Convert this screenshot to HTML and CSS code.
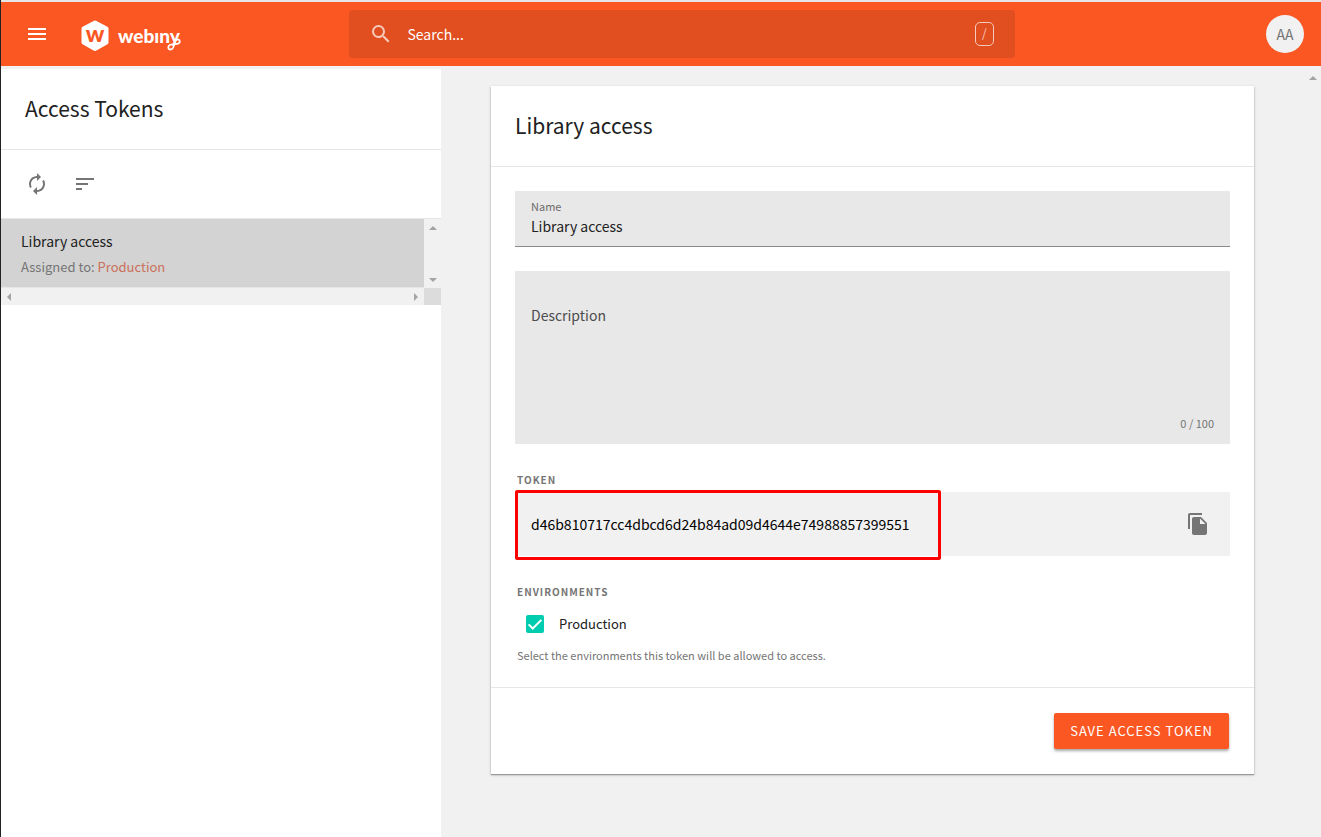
FILE: index.html
```html
<!DOCTYPE html>
<html lang="en">
<head>
<meta charset="utf-8">
<title>Access Tokens</title>
<link rel="stylesheet" href="styles.css">
</head>
<body>
<div class="app">
  <header class="topbar">
    <div class="topbar-left">
      <button class="icon-button menu-button" type="button" aria-label="Menu">
        <svg width="24" height="24" viewBox="0 0 24 24" fill="currentColor"><path d="M3 18h18v-2H3v2zm0-5h18v-2H3v2zm0-7v2h18V6H3z"/></svg>
      </button>
      <a class="logo" href="#" aria-label="webiny">
        <svg width="101" height="34" viewBox="0 0 101 34">
          <path d="M14 3.500L25.500 9.500V23.500L14 30L2.500 23.500V9.500Z" fill="#fff" stroke="#fff" stroke-width="4" stroke-linejoin="round"/>
          <text class="logo-mark" x="14" y="23" text-anchor="middle">w</text>
          <text class="logo-word" x="37" y="24">webıny</text>
          <path d="M94 21C93.500 26 92.500 30.500 89.500 30.500C86.500 30.500 86.500 26.500 90 25.500C94 24.500 98.800 26 98.800 22.500C98.800 20.500 96.500 19.800 95.500 21" fill="none" stroke="#fff" stroke-width="1.800" stroke-linecap="round"/>
        </svg>
      </a>
    </div>
    <label class="search">
      <svg width="24" height="24" viewBox="0 0 24 24" fill="currentColor"><path d="M15.500 14h-.79l-.28-.27A6.471 6.471 0 0 0 16 9.500 6.500 6.500 0 1 0 9.500 16c1.610 0 3.090-.59 4.230-1.570l.27.28v.79l5 4.990L20.490 19l-4.990-5zm-6 0C7.010 14 5 11.990 5 9.500S7.010 5 9.500 5 14 7.010 14 9.500 11.990 14 9.500 14z"/></svg>
      <input class="search-input" type="text" placeholder="Search..." aria-label="Search">
      <kbd class="search-key">/</kbd>
    </label>
    <div class="topbar-right">
      <button class="avatar" type="button">AA</button>
    </div>
  </header>

  <div class="body">
    <aside class="sidebar">
      <h1 class="heading">Access Tokens</h1>
      <div class="toolbar">
        <button class="icon-button" type="button" aria-label="Refresh">
          <svg width="24" height="24" viewBox="0 0 24 24" fill="currentColor"><path d="M12 6v3l4-4-4-4v3c-4.420 0-8 3.580-8 8 0 1.570.46 3.030 1.240 4.260L6.700 14.800A5.870 5.870 0 0 1 6 12c0-3.310 2.690-6 6-6zm6.760 1.740L17.300 9.200c.44.84.7 1.790.7 2.800 0 3.310-2.690 6-6 6v-3l-4 4 4 4v-3c4.420 0 8-3.580 8-8 0-1.570-.46-3.030-1.240-4.260z"/></svg>
        </button>
        <button class="icon-button" type="button" aria-label="Sort">
          <svg width="24" height="24" viewBox="0 0 24 24" fill="currentColor"><path d="M3 18h6v-2H3v2zM3 6v2h18V6H3zm0 7h12v-2H3v2z"/></svg>
        </button>
      </div>
      <div class="list">
        <a class="list-item" href="#">
          <span class="item-name">Library access</span>
          <span class="item-meta">Assigned to: <span class="env-name">Production</span></span>
        </a>
        <div class="track track-v"><i class="arrow up"></i><i class="arrow down"></i></div>
        <div class="track track-h"><i class="arrow left"></i><i class="arrow right"></i></div>
        <div class="track-corner"></div>
      </div>
    </aside>

    <main class="content">
      <form class="card">
        <h2 class="heading">Library access</h2>
        <div class="card-body">
          <div class="field">
            <label class="field-label" for="name">Name</label>
            <input class="field-input" id="name" type="text" value="Library access">
          </div>
          <div class="field-area">
            <textarea class="area-input" id="description" placeholder="Description" aria-label="Description"></textarea>
            <span class="counter">0 / 100</span>
          </div>
          <section class="group">
            <h3 class="group-label">TOKEN</h3>
            <div class="token">
              <span class="token-value">d46b810717cc4dbcd6d24b84ad09d4644e74988857399551</span>
              <button class="icon-button" type="button" aria-label="Copy token">
                <svg width="24" height="24" viewBox="0 0 24 24" fill="currentColor"><path d="M16 1H4c-1.100 0-2 .9-2 2v14h2V3h12V1zm-1 4l6 6v10c0 1.100-.9 2-2 2H7.990C6.890 23 6 22.100 6 21l.010-14c0-1.100.89-2 1.990-2h7zm-1 7h5.500L14 6.500V12z"/></svg>
              </button>
            </div>
          </section>
          <section class="group">
            <h3 class="group-label">ENVIRONMENTS</h3>
            <label class="check">
              <input class="check-box" type="checkbox" checked>
              <svg class="check-mark" width="18" height="18" viewBox="0 0 24 24"><path d="M3.500 12.500L9 18L20.500 6.500" fill="none" stroke="#fff" stroke-width="2.600"/></svg>
              <span>Production</span>
            </label>
            <p class="help">Select the environments this token will be allowed to access.</p>
          </section>
        </div>
        <div class="card-footer">
          <button class="save" type="submit">SAVE ACCESS TOKEN</button>
        </div>
      </form>
    </main>
    <div class="track page-track"><i class="arrow up"></i></div>
  </div>
</div>
</body>
</html>
```

FILE: styles.css
```css
* {
  box-sizing: border-box;
}

body {
  margin: 0;
  font-family: "Noto Sans CJK JP", "Noto Sans", sans-serif;
  font-size: 14px;
  line-height: 20px;
  color: #212121;
  background: #f1f1f1;
}

button,
input,
textarea {
  font: inherit;
  color: inherit;
}

h1, h2, h3, p {
  margin: 0;
}

.app {
  min-height: 100vh;
  display: flex;
  flex-direction: column;
  border-left: 1px solid #222;
}

.topbar {
  display: grid;
  grid-template-columns: 26.4% 50.4% 1fr;
  align-items: center;
  height: 66px;
  border-top: 2px solid #e6e6e6;
  background: #fa5723;
  color: #fff;
}

.topbar-left {
  display: flex;
  align-items: center;
  gap: 20px;
  padding-left: 12px;
}

.icon-button {
  display: flex;
  align-items: center;
  justify-content: center;
  flex: none;
  width: 48px;
  height: 48px;
  padding: 0;
  border: 0;
  background: none;
  color: #757575;
}

.menu-button {
  color: #fff;
}

.logo {
  display: flex;
  padding-top: 4px;
}

.logo-mark,
.logo-word {
  font-family: Lato, sans-serif;
  font-weight: 900;
}

.logo-mark {
  font-size: 23px;
  fill: #fa5723;
}

.logo-word {
  font-size: 19px;
  fill: #fff;
}

.search {
  display: flex;
  align-items: center;
  height: 48px;
  padding: 0 21px 0 20px;
  border-radius: 4px;
  background: #e14f20;
}

.search svg {
  flex: none;
  opacity: 0.7;
}

.search-input {
  flex: 1;
  min-width: 0;
  margin-left: 14px;
  padding: 0;
  border: 0;
  background: none;
  outline: 0;
}

.search-input::placeholder {
  color: #fff;
  opacity: 1;
}

.search-key {
  width: 19px;
  height: 24px;
  border: 1px solid #f5cabc;
  border-radius: 5px;
  font-family: inherit;
  font-size: 12px;
  line-height: 20px;
  text-align: center;
  color: #f5cabc;
}

.topbar-right {
  display: flex;
  justify-content: flex-end;
  padding-right: 17px;
}

.avatar {
  width: 38px;
  height: 38px;
  padding: 0;
  border: 0;
  border-radius: 50%;
  background: #f1f1f1;
  color: #757575;
}

.body {
  flex: 1;
  display: flex;
}

.sidebar {
  flex: none;
  width: 440px;
  margin-top: 3px;
  background: #fff;
}

.heading {
  padding: 24px;
  border-bottom: 1px solid #e6e6e6;
  padding-top: 23px;
  padding-bottom: 25px;
  font-size: 21px;
  font-weight: 400;
  line-height: 32px;
}

.toolbar {
  display: flex;
  padding: 10px 12px;
  border-bottom: 1px solid #e6e6e6;
}

.list {
  display: grid;
  grid-template-columns: 1fr 17px;
  grid-template-rows: auto 17px;
}

.list-item {
  display: flex;
  flex-direction: column;
  gap: 6px;
  padding: 12px 20px 10px;
  border-bottom: 1px solid #e6e6e6;
  background: #d3d3d3;
  color: #212121;
  text-decoration: none;
}

.item-meta {
  font-size: 13px;
  color: #757575;
}

.env-name {
  color: #cb705a;
}

.track {
  display: flex;
  align-items: center;
  justify-content: space-between;
  background: #f1f1f1;
}

.track-v {
  flex-direction: column;
  padding: 7px 0 6px;
}

.track-h {
  padding: 0 6px;
}

.track-corner {
  background: #dcdcdc;
}

.arrow {
  border: 4px solid transparent;
}

.up {
  border-top: 0;
  border-bottom-color: #a3a3a3;
}

.down {
  border-bottom: 0;
  border-top-color: #a3a3a3;
}

.left {
  border-left: 0;
  border-right-color: #a3a3a3;
}

.right {
  border-right: 0;
  border-left-color: #a3a3a3;
}

.page-track {
  flex: none;
  width: 17px;
  flex-direction: column;
  padding-top: 10px;
}

.content {
  flex: 1;
  min-width: 0;
  padding: 20px 50px;
}

.card {
  background: #fff;
  box-shadow: 0 1px 1px #999, 0 1px 3px rgba(0, 0, 0, 0.2);
}

.card-body {
  padding: 24px;
}

.field {
  display: flex;
  flex-direction: column;
  height: 56px;
  padding: 7px 16px 0;
  border-bottom: 1px solid #8a8a8a;
  background: #e8e8e8;
}

.field-label {
  font-size: 11px;
  line-height: 16px;
  color: #6b6b6b;
}

.field-input {
  height: 24px;
  padding: 0;
  border: 0;
  background: none;
  outline: 0;
}

.field-area {
  display: flex;
  flex-direction: column;
  margin-top: 24px;
  padding: 34px 16px 13px;
  background: #e8e8e8;
}

.area-input {
  height: 110px;
  padding: 0;
  border: 0;
  background: none;
  outline: 0;
  resize: none;
}

.area-input::placeholder {
  color: #4d4d4d;
  opacity: 1;
}

.counter {
  align-self: flex-end;
  font-size: 11px;
  line-height: 16px;
  color: #757575;
}

.group {
  margin-top: 28px;
}

.group-label {
  padding-left: 2px;
  font-size: 10px;
  font-weight: 700;
  line-height: 16px;
  letter-spacing: 1px;
  color: #757575;
}

.token {
  display: flex;
  align-items: center;
  justify-content: space-between;
  height: 64px;
  margin-top: 4px;
  padding-right: 8px;
  background: #f1f1f1;
}

.token-value {
  margin: -2px 0 -4px;
  padding: 21px 28px 23px 13px;
  border: 3px solid #f00;
  border-radius: 2px;
  color: #000;
}

.check {
  position: relative;
  display: flex;
  align-items: center;
  gap: 15px;
  height: 40px;
  margin-top: 4px;
  padding-left: 11px;
  font-size: 13px;
}

.check-box {
  appearance: none;
  width: 18px;
  height: 18px;
  margin: 0;
  border-radius: 2px;
  background: #00ccb0;
}

.check-mark {
  position: absolute;
  left: 11px;
}

.help {
  margin-top: 3px;
  padding-left: 2px;
  font-size: 11px;
  line-height: 16px;
  color: #757575;
}

.card-footer {
  display: flex;
  justify-content: flex-end;
  padding: 25px;
  border-top: 1px solid #e6e6e6;
}

.save {
  height: 36px;
  padding: 0 16px;
  border: 0;
  border-radius: 2px;
  background: #fa5723;
  box-shadow: 0 2px 3px rgba(0, 0, 0, 0.35);
  color: #fff;
  font-size: 13px;
  letter-spacing: 1px;
}
```
